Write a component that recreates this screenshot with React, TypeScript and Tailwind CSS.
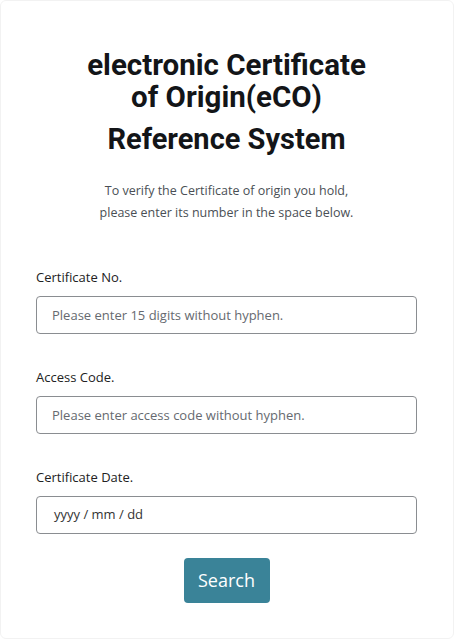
const body = { fontFamily: '"Open Sans", "Noto Sans", sans-serif' };
const head = { fontFamily: 'Roboto, "Liberation Sans", sans-serif' };

const FIELDS = [
  { label: 'Certificate No.', placeholder: 'Please enter 15 digits without hyphen.' },
  { label: 'Access Code.', placeholder: 'Please enter access code without hyphen.' },
];

export default function App() {
  return (
    <div className="min-h-[639px] w-full bg-white">
      <div className="mx-auto w-[454px] min-h-[639px] rounded-md border border-[#f2f2f2] bg-white pl-[35px] pr-[36px] pt-[48px] pb-[35px]">
        <h1 className="text-center text-[29.5px] font-bold leading-[32px] text-[#131518]" style={head}>
          electronic Certificate
          <br />
          of Origin(eCO)
        </h1>
        <h2 className="mt-[10px] text-center text-[29px] font-bold leading-[32px] text-[#131518]" style={head}>
          Reference System
        </h2>

        <p className="mt-[25px] text-center text-[12.5px] leading-[22px] text-[#4a4f55]" style={body}>
          To verify the Certificate of origin you hold,
          <br />
          please enter its number in the space below.
        </p>

        <form className="mt-[44px] flex flex-col" style={body} onSubmit={e => e.preventDefault()}>
          {FIELDS.map(f => (
            <div key={f.label} className="mb-[34px] flex flex-col">
              <label className="mb-[10px] text-[13px] leading-[18px] text-[#222]">{f.label}</label>
              <input
                placeholder={f.placeholder}
                className="h-[38px] w-full rounded-[4px] border border-[#8a8d91] bg-white px-[15px] text-[13px] text-[#333] placeholder:text-[#666a70] outline-none"
              />
            </div>
          ))}
          <div className="flex flex-col">
            <label className="mb-[10px] text-[13px] leading-[18px] text-[#222]">Certificate Date.</label>
            <div className="flex h-[38px] w-full items-center rounded-[4px] border border-[#8a8d91] bg-white px-[17px] text-[13px] text-[#333]">
              yyyy / mm / dd
            </div>
          </div>

          <div className="mt-[24px] flex justify-center">
            <button
              type="submit"
              className="h-[45px] w-[86px] rounded-[4px] bg-[#3a8398] text-[18px] text-white"
            >
              Search
            </button>
          </div>
        </form>
      </div>
    </div>
  );
}
